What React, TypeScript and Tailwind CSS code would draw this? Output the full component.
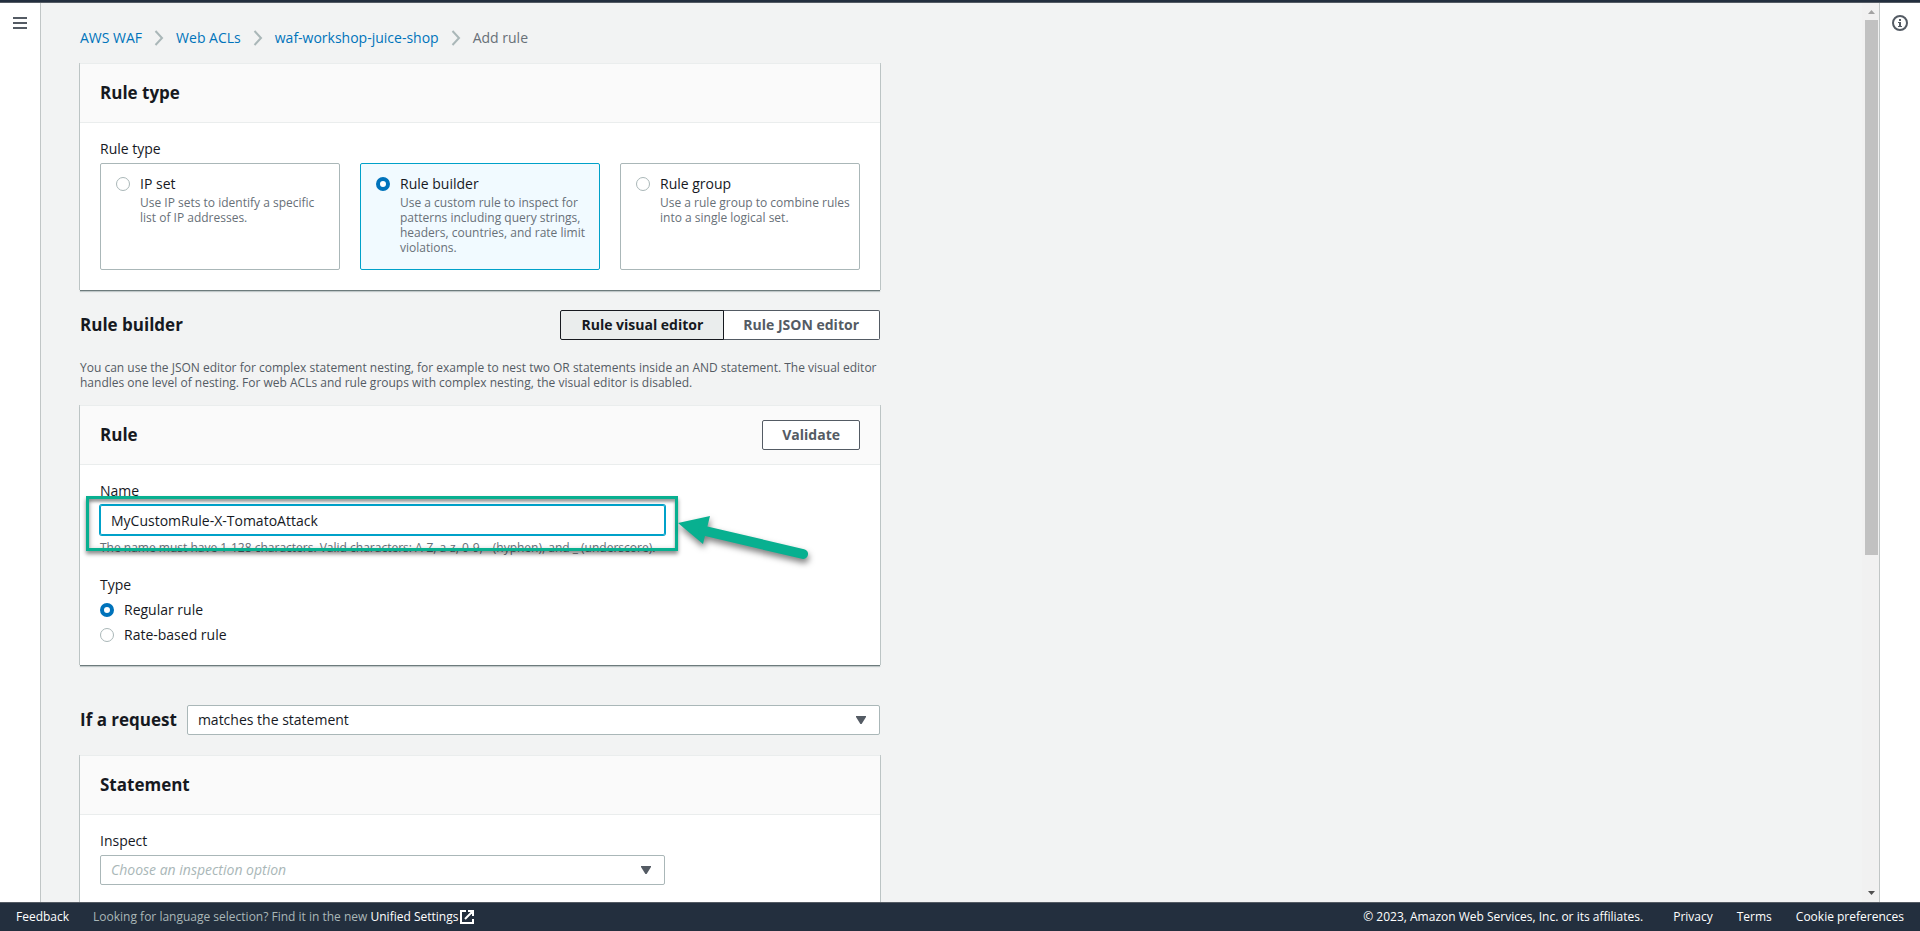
import { useState } from "react";
import type { ReactNode } from "react";

function Chevron() {
  return (
    <svg width="10" height="16" viewBox="0 0 10 16" fill="none" aria-hidden="true">
      <path d="M1.5 1 8 8l-6.5 7" stroke="#aab7b8" strokeWidth="2" />
    </svg>
  );
}

function Caret() {
  return (
    <svg
      className="pointer-events-none absolute top-1/2 right-[14px] -translate-y-1/2"
      width="10"
      height="8"
      viewBox="0 0 10 8"
      aria-hidden="true"
    >
      <path d="M0 0h10v1L5.6 8H4.4L0 1z" fill="#545b64" />
    </svg>
  );
}

function Container({ title, action, children }: { title: string; action?: ReactNode; children: ReactNode }) {
  return (
    <section className="border-t border-[#eaeded] bg-white shadow-[0_1px_0_0_#6d7b7c,0_2px_1px_0_rgba(0,28,36,0.2),-1px_0_0_0_#c3caca,1px_0_0_0_#c3caca]">
      <header className="flex h-[59px] items-center justify-between border-b border-[#eaeded] bg-[#fafafa] px-5">
        <h2 className="text-[17px] leading-[22px] font-bold">{title}</h2>
        {action}
      </header>
      <div className="px-5 pt-[15px]">{children}</div>
    </section>
  );
}

const radioClass =
  "h-[14px] w-[14px] shrink-0 appearance-none rounded-full border border-[#aab7b8] bg-white checked:border-4 checked:border-[#0073bb]";

const tiles = [
  { id: "ip", title: "IP set", text: "Use IP sets to identify a specific list of IP addresses." },
  {
    id: "builder",
    title: "Rule builder",
    text: "Use a custom rule to inspect for patterns including query strings, headers, countries, and rate limit violations.",
  },
  { id: "group", title: "Rule group", text: "Use a rule group to combine rules into a single logical set." },
];

function RuleTypeTiles() {
  const [selected, setSelected] = useState("builder");
  return (
    <fieldset className="pb-5">
      <legend className="leading-[22px]">Rule type</legend>
      <div className="mt-[3px] grid grid-cols-3 gap-5">
        {tiles.map((t) => (
          <label
            key={t.id}
            className="flex min-h-[107px] gap-[10px] rounded-xs border border-[#aab7b8] bg-white py-[9px] pr-2 pl-[15px] has-checked:border-[#00a1c9] has-checked:bg-[#f1faff]"
          >
            <input
              type="radio"
              name="tile"
              className={`${radioClass} mt-1`}
              checked={selected === t.id}
              onChange={() => setSelected(t.id)}
            />
            <span>
              <span className="block leading-[22px]">{t.title}</span>
              <span className="block text-xs leading-[15px] text-[#687078]">{t.text}</span>
            </span>
          </label>
        ))}
      </div>
    </fieldset>
  );
}

function Annotation() {
  return (
    <div className="pointer-events-none absolute -top-[9px] -right-[13px] -left-[14px] h-[55px] border-[3px] border-[#08b090] shadow-[0_3px_4px_rgba(0,0,0,0.45),inset_0_3px_3px_rgba(0,0,0,0.35),inset_2px_0_4px_rgba(0,0,0,0.15)]">
      <svg
        className="absolute top-4 left-full overflow-visible drop-shadow-[1px_4px_3px_rgba(0,0,0,0.5)]"
        width="133"
        height="48"
        viewBox="0 0 133 48"
        aria-hidden="true"
      >
        <path d="M3 8 35 1 28 29z" fill="#08b090" />
        <path d="M28 15.500 128 39" stroke="#08b090" strokeWidth="10" strokeLinecap="round" />
      </svg>
    </div>
  );
}

function RuleForm() {
  const [type, setType] = useState("regular");
  return (
    <>
      <div className="w-[calc(75%-5px)]">
        <label htmlFor="rule-name" className="block leading-[22px]">
          Name
        </label>
        <div className="relative mt-[3px]">
          <input
            id="rule-name"
            className="block h-[30px] w-full rounded-xs bg-white px-[11px] shadow-[0_0_0_1px_#00a1c9,inset_0_0_0_1px_#00a1c9] outline-none"
            defaultValue="MyCustomRule-X-TomatoAttack"
            aria-describedby="rule-name-hint"
          />
          <Annotation />
        </div>
        <p id="rule-name-hint" className="mt-[5px] text-xs leading-[15px] text-[#687078]">
          The name must have 1-128 characters. Valid characters: A-Z, a-z, 0-9, - (hyphen), and _ (underscore).
        </p>
      </div>
      <fieldset className="mt-[19px] pb-[19px]">
        <legend className="leading-[22px]">Type</legend>
        <div className="mt-[3px] flex flex-col gap-[3px]">
          <label className="flex items-center gap-[10px] leading-[22px]">
            <input
              type="radio"
              name="type"
              className={radioClass}
              checked={type === "regular"}
              onChange={() => setType("regular")}
            />
            Regular rule
          </label>
          <label className="flex items-center gap-[10px] leading-[22px]">
            <input
              type="radio"
              name="type"
              className={radioClass}
              checked={type === "rate"}
              onChange={() => setType("rate")}
            />
            Rate-based rule
          </label>
        </div>
      </fieldset>
    </>
  );
}

const selectClass =
  "block h-[30px] w-full appearance-none rounded-xs border border-[#aab7b8] bg-white px-[10px] outline-none";

export default function App() {
  return (
    <div className="flex h-screen flex-col bg-[#f2f3f3] font-['Open_Sans','Noto_Sans',sans-serif] text-sm text-[#16191f]">
      <div className="h-[3px] shrink-0 border-b border-[#545b64] bg-[#232f3e]" />
      <div className="flex min-h-0 flex-1">
        <nav className="w-[41px] shrink-0 border-r border-[#c1c6c6] bg-white">
          <button type="button" aria-label="Open navigation" className="mt-[14px] ml-[13px] block">
            <svg width="14" height="12" viewBox="0 0 14 12" aria-hidden="true">
              <path d="M0 0h14v2H0zM0 5h14v2H0zM0 10h14v2H0z" fill="#545b64" />
            </svg>
          </button>
        </nav>

        <main className="min-w-0 flex-1 overflow-y-auto pt-6 pl-[39px] [scrollbar-width:none]">
          <div className="flex max-w-[800px] flex-col">
            <nav aria-label="Breadcrumb" className="flex h-[22px] items-center gap-3">
              <a href="#waf" className="text-[#0073bb]">AWS WAF</a>
              <Chevron />
              <a href="#acls" className="text-[#0073bb]">Web ACLs</a>
              <Chevron />
              <a href="#shop" className="text-[#0073bb]">waf-workshop-juice-shop</a>
              <Chevron />
              <span className="text-[#687078]">Add rule</span>
            </nav>

            <div className="mt-[14px]">
              <Container title="Rule type">
                <RuleTypeTiles />
              </Container>
            </div>

            <div className="mt-5 flex items-center justify-between">
              <h2 className="text-[17px] leading-[22px] font-bold">Rule builder</h2>
              <div className="flex">
                <button
                  type="button"
                  className="relative h-[30px] rounded-l-xs border border-[#16191f] bg-[#eaeded] px-5 font-bold"
                >
                  Rule visual editor
                </button>
                <button
                  type="button"
                  className="-ml-px h-[30px] rounded-r-xs border border-l-0 border-[#545b64] bg-white px-5 font-bold text-[#545b64]"
                >
                  Rule JSON editor
                </button>
              </div>
            </div>

            <p className="mt-5 text-xs leading-[15px] text-[#545b64]">
              You can use the JSON editor for complex statement nesting, for example to nest two OR statements inside an
              AND statement. The visual editor handles one level of nesting. For web ACLs and rule groups with complex
              nesting, the visual editor is disabled.
            </p>

            <div className="mt-[15px]">
              <Container
                title="Rule"
                action={
                  <button
                    type="button"
                    className="h-[30px] rounded-xs border border-[#545b64] bg-white px-[19px] font-bold text-[#545b64]"
                  >
                    Validate
                  </button>
                }
              >
                <RuleForm />
              </Container>
            </div>

            <div className="mt-10 flex items-center gap-[10px]">
              <label htmlFor="match" className="shrink-0 text-[17px] leading-[22px] font-bold">
                If a request
              </label>
              <div className="relative flex-1">
                <select id="match" className={selectClass}>
                  <option>matches the statement</option>
                </select>
                <Caret />
              </div>
            </div>

            <div className="mt-5">
              <Container title="Statement">
                <div className="w-[calc(75%-5px)] pb-5">
                  <label htmlFor="inspect" className="block leading-[22px]">
                    Inspect
                  </label>
                  <div className="relative mt-[3px]">
                    <select id="inspect" className={`${selectClass} text-[#aab7b8] italic`}>
                      <option>Choose an inspection option</option>
                    </select>
                    <Caret />
                  </div>
                </div>
              </Container>
            </div>
          </div>
        </main>

        <div className="flex w-[17px] shrink-0 flex-col items-center bg-[#f1f1f1] pb-[7px] pl-[2px]" aria-hidden="true">
          <svg className="mt-[7px] shrink-0" width="7" height="4" viewBox="0 0 7 4">
            <path d="M3.500 0 7 4H0z" fill="#a3a3a3" />
          </svg>
          <div className="mt-[6px] h-[60%] w-[13px] bg-[#c1c1c1]" />
          <svg className="mt-auto shrink-0" width="7" height="4" viewBox="0 0 7 4">
            <path d="M0 0h7L3.500 4z" fill="#505050" />
          </svg>
        </div>

        <aside className="w-[41px] shrink-0 border-l border-[#c1c6c6] bg-white">
          <button type="button" aria-label="Open info panel" className="mt-3 ml-3 block">
            <svg width="16" height="16" viewBox="0 0 16 16" fill="none" aria-hidden="true">
              <circle cx="8" cy="8" r="7" stroke="#545b64" strokeWidth="2" />
              <path d="M7 4h2v2H7zM6 7h3v4h1v1H6v-1h1V8H6z" fill="#545b64" />
            </svg>
          </button>
        </aside>
      </div>

      <footer className="flex h-[29px] shrink-0 items-center justify-between border-t border-[#545b64] bg-[#232f3e] px-4 text-xs font-medium text-white">
        <div className="flex items-center">
          <a href="#feedback">Feedback</a>
          <p className="ml-6 font-normal text-[#aab7b8]">
            Looking for language selection? Find it in the new{" "}
            <a href="#settings" className="font-medium text-white">
              Unified Settings
            </a>
          </p>
          <svg className="ml-[2px]" width="14" height="14" viewBox="0 0 14 14" fill="none" aria-hidden="true">
            <path d="M6 1H1v12h12V9M8 1h5v5M13 1 5 9" stroke="#fff" strokeWidth="2" />
          </svg>
        </div>
        <div className="flex items-center">
          <span className="mr-[30px]">© 2023, Amazon Web Services, Inc. or its affiliates.</span>
          <div className="flex gap-6">
            <a href="#privacy">Privacy</a>
            <a href="#terms">Terms</a>
            <a href="#cookies">Cookie preferences</a>
          </div>
        </div>
      </footer>
    </div>
  );
}
